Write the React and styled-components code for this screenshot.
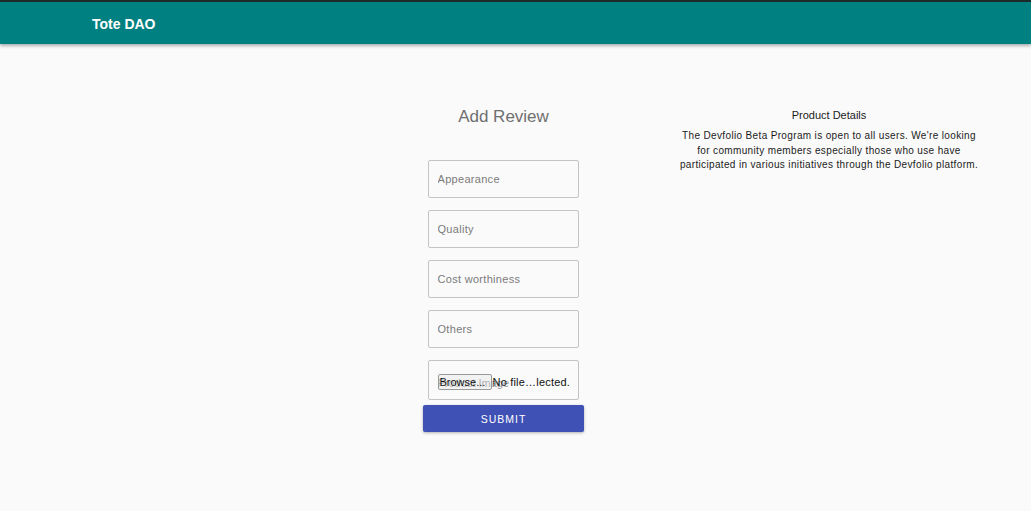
import React from 'react'
import styled, { createGlobalStyle } from 'styled-components'

const GlobalStyle = createGlobalStyle`
  html, body {
    margin: 0;
    padding: 0;
    background: #fafafa;
    font-family: "Liberation Sans", Arial, sans-serif;
  }
`

const Page = styled.div`
  min-height: 511px;
  background: #fafafa;
`

const AppBar = styled.header`
  height: 42px;
  box-sizing: content-box;
  background: #008080;
  border-top: 2px solid #1d2a2a;
  box-shadow: 0 2px 3px rgba(0, 0, 0, 0.3);
  display: flex;
  align-items: center;
  padding-left: 92px;
`

const Brand = styled.span`
  color: #ffffff;
  font-size: 14px;
  font-weight: bold;
  padding-top: 2px;
`

const Main = styled.main`
  display: flex;
  align-items: flex-start;
  padding: 63px 0 0 423px;
`

const FormColumn = styled.form`
  width: 161px;
  display: flex;
  flex-direction: column;
  align-items: center;
`

const Title = styled.h2`
  margin: 0 0 33px;
  font-size: 17px;
  font-weight: normal;
  color: #6f6f6f;
  line-height: 20px;
`

const Field = styled.div`
  width: 151px;
  height: ${(p) => (p.$last ? '40px' : '38px')};
  box-sizing: border-box;
  border: 1px solid #c4c4c4;
  border-radius: 2px;
  display: flex;
  align-items: center;
  padding-left: 9px;
  margin: 0 1px ${(p) => (p.$last ? '5px' : '12px')} 0;
  position: relative;
  background: #fafafa;
`

const TextInput = styled.input`
  border: none;
  outline: none;
  background: transparent;
  width: 100%;
  font-family: "Liberation Sans", Arial, sans-serif;
  font-size: 11px;
  letter-spacing: 0.3px;
  color: #333;
  padding: 0;
  &::placeholder {
    color: #7a7a7a;
  }
`

const FileRow = styled.div`
  display: flex;
  align-items: center;
  font-size: 11px;
  position: relative;
  height: 38px;
  padding-top: 4px;
  box-sizing: border-box;
`

const FileHint = styled.span`
  position: absolute;
  left: 0;
  top: 16px;
  color: #9a9a9a;
  font-size: 11px;
  white-space: nowrap;
`

const BrowseButton = styled.span`
  position: relative;
  display: inline-block;
  border: 1px solid #9a9a9a;
  border-radius: 2px;
  background: rgba(225, 225, 225, 0.35);
  padding: 0 1px;
  height: 14px;
  line-height: 14px;
  color: #111;
  width: 50px;
  overflow: hidden;
  white-space: nowrap;
  margin-right: 1px;
`

const FileName = styled.span`
  position: relative;
  color: #111;
  white-space: nowrap;
  letter-spacing: 0.2px;
`

const SubmitButton = styled.button`
  width: 161px;
  height: 27px;
  border: none;
  border-radius: 2px;
  background: #3f51b5;
  color: #ffffff;
  font-family: "Liberation Sans", Arial, sans-serif;
  font-size: 10.5px;
  letter-spacing: 1px;
  box-shadow: 0 1px 3px rgba(0, 0, 0, 0.3);
  cursor: pointer;
`

const Details = styled.section`
  width: 306px;
  margin: 1px 0 0 92px;
  text-align: center;
  color: #1a1a1a;
`

const DetailsTitle = styled.h3`
  margin: 0 0 7px;
  font-size: 11px;
  font-weight: normal;
  line-height: 14px;
`

const DetailsText = styled.p`
  margin: 0;
  font-size: 10px;
  line-height: 14.5px;
  letter-spacing: 0.35px;
`

const fields = ['Appearance', 'Quality', 'Cost worthiness', 'Others']

export default function App() {
  return (
    <Page>
      <GlobalStyle />
      <AppBar>
        <Brand>Tote DAO</Brand>
      </AppBar>
      <Main>
        <FormColumn onSubmit={(e) => e.preventDefault()}>
          <Title>Add Review</Title>
          {fields.map((f) => (
            <Field key={f}>
              <TextInput placeholder={f} />
            </Field>
          ))}
          <Field $last>
            <FileRow>
              <FileHint>Product Image</FileHint>
              <BrowseButton>Browse...</BrowseButton>
              <FileName>No file…lected.</FileName>
            </FileRow>
          </Field>
          <SubmitButton type="submit">SUBMIT</SubmitButton>
        </FormColumn>
        <Details>
          <DetailsTitle>Product Details</DetailsTitle>
          <DetailsText>
            The Devfolio Beta Program is open to all users. We're looking for
            community members especially those who use have participated in
            various initiatives through the Devfolio platform.
          </DetailsText>
        </Details>
      </Main>
    </Page>
  )
}
